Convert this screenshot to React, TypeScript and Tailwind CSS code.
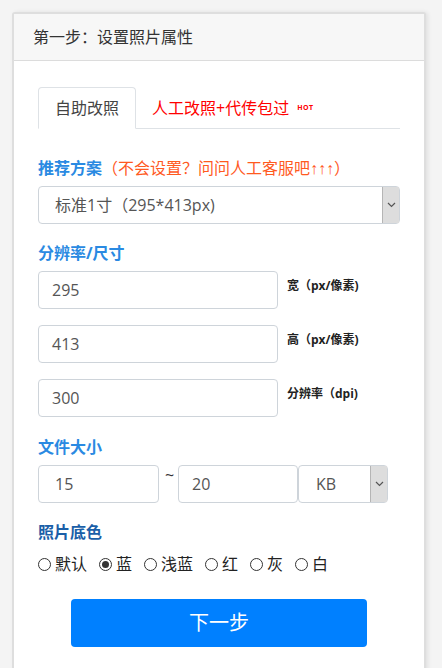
import React, { useState } from 'react';

const FONT = { fontFamily: '"Open Sans", "Noto Sans CJK SC", sans-serif' };
const ARROW_FONT = { fontFamily: '"Liberation Sans", sans-serif' };

const colors = ['默认', '蓝', '浅蓝', '红', '灰', '白'];

const Chevron: React.FC = () => (
    <svg width="9" height="6" viewBox="0 0 9 6" fill="none" stroke="#555" strokeWidth="1.2">
        <polyline points="1,1 4.5,4.5 8,1" />
    </svg>
);

const FakeSelect: React.FC<{ value: string; className?: string; textClass?: string }> = ({ value, className, textClass }) => (
    <div className={`flex h-[38px] items-stretch rounded-[4px] border border-[#ced4da] bg-white ${className ?? ''}`}>
        <div className={`flex flex-1 items-center text-[16px] text-[#555] ${textClass ?? ''}`}>{value}</div>
        <div className="flex w-[17px] items-center justify-center border-l border-[#b5b5b5] bg-[#dddddd]">
            <Chevron />
        </div>
    </div>
);

const TextBox: React.FC<{ value: string; className?: string }> = ({ value, className }) => (
    <div className={`flex h-[38px] items-center rounded-[4px] border border-[#ced4da] bg-white pl-[13px] text-[16px] text-[#555] ${className ?? ''}`}>
        {value}
    </div>
);

const SectionLabel: React.FC<{ children: React.ReactNode; className?: string }> = ({ children, className }) => (
    <div className={`text-[16px] font-bold leading-[24px] ${className ?? 'text-[#2a8ae2]'}`}>{children}</div>
);

const App: React.FC = () => {
    const [picked, setPicked] = useState('蓝');

    return (
        <div className="min-h-[668px] bg-[#f4f4f4] px-3 pt-3" style={FONT}>
            <div className="h-[680px] w-[414px] rounded-t-[3px] border-2 border-[#dedede] bg-white shadow-[2px_0_4px_rgba(0,0,0,0.08)]">
                <div className="flex h-[47px] items-center border-b border-[#dcdcdc] bg-[#f7f7f7] pl-[19px] text-[16px] text-[#333]">
                    第一步：设置照片属性
                </div>

                <div className="px-6 pt-[26px]">
                    {/* tabs */}
                    <div className="flex h-[42px] border-b border-[#dee2e6]">
                        <div className="-mb-px flex items-center rounded-t-[4px] border border-b-white border-[#dee2e6] bg-white px-4 text-[16px] text-[#444]">
                            自助改照
                        </div>
                        <div className="flex items-center pl-4 text-[16px] text-[#ff0000]">
                            人工改照+代传包过
                            <span className="ml-[8px] mt-[2px] text-[7px] font-bold tracking-[0.5px]">HOT</span>
                        </div>
                    </div>

                    <SectionLabel className="mt-[27px] text-[#2a8ae2]">
                        推荐方案<span className="font-normal text-[#ff5a1f]">（不会设置？问问人工客服吧<span style={ARROW_FONT}>↑↑↑</span>）</span>
                    </SectionLabel>
                    <FakeSelect value="标准1寸（295*413px)" className="mt-[5px] w-[362px]" textClass="pl-[16px]" />

                    <SectionLabel className="mt-[17px] text-[#2a8ae2]">分辨率/尺寸</SectionLabel>
                    <div className="mt-[6px] flex flex-col gap-4">
                        {[
                            ['295', '宽（px/像素)'],
                            ['413', '高（px/像素)'],
                            ['300', '分辨率（dpi)'],
                        ].map(([v, l]) => (
                            <div key={l} className="flex items-start">
                                <TextBox value={v} className="w-[240px]" />
                                <div className="ml-[9px] mt-[6px] text-[12px] font-bold text-[#222]">{l}</div>
                            </div>
                        ))}
                    </div>

                    <SectionLabel className="mt-[18px] text-[#2a8ae2]">文件大小</SectionLabel>
                    <div className="mt-[6px] flex items-start">
                        <TextBox value="15" className="w-[121px] pl-[16px]" />
                        <div className="w-[19px] pl-[6px] text-[16px] leading-[20px] text-[#333]">~</div>
                        <TextBox value="20" className="w-[120px]" />
                        <FakeSelect value="KB" className="w-[90px]" textClass="pl-[17px]" />
                    </div>

                    <SectionLabel className="mt-[17px] text-[#1b5fa8]">照片底色</SectionLabel>
                    <div className="mt-[8px] flex items-center text-[16px] leading-[24px] text-[#222]">
                        {colors.map(c => (
                            <label key={c} className="mr-[12px] flex cursor-pointer items-center" onClick={() => setPicked(c)}>
                                <span className="mr-[4px] flex h-[13px] w-[13px] items-center justify-center rounded-full border border-[#333] bg-white">
                                    {picked === c && <span className="h-[7px] w-[7px] rounded-full bg-[#333]" />}
                                </span>
                                {c}
                            </label>
                        ))}
                    </div>

                    <div className="mt-[23px] flex justify-center">
                        <button className="h-[48px] w-[296px] rounded-[4px] bg-[#0080ff] text-[20px] text-white">
                            下一步
                        </button>
                    </div>
                </div>
            </div>
        </div>
    );
};

export default App;
